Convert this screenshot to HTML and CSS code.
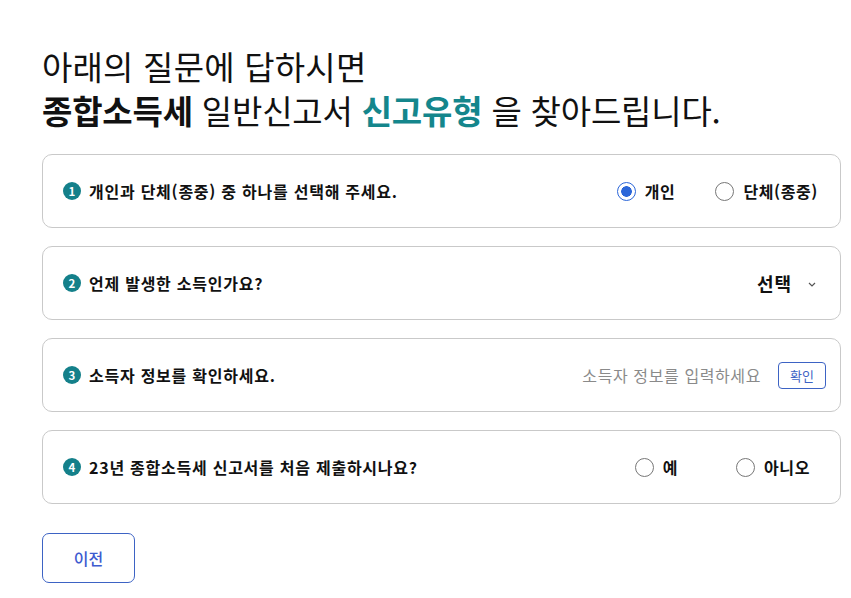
FILE: index.html
```html
<!DOCTYPE html>
<html lang="ko">
<head>
<meta charset="utf-8">
<link rel="stylesheet" href="styles.css">
</head>
<body>
<main class="page">
  <h1 class="title">
    <span class="line">아래의 질문에 답하시면</span>
    <span class="line line2"><b>종합소득세</b> 일반신고서 <b class="accent">신고유형</b> 을 찾아드립니다.</span>
  </h1>

  <section class="cards">
    <div class="card">
      <div class="q"><span class="num">1</span>개인과 단체(종중) 중 하나를 선택해 주세요.</div>
      <div class="opts">
        <label class="radio"><span class="dot on"></span>개인</label>
        <label class="radio"><span class="dot"></span>단체(종중)</label>
      </div>
    </div>

    <div class="card">
      <div class="q"><span class="num">2</span>언제 발생한 소득인가요?</div>
      <div class="select">선택
        <svg class="chev" width="8" height="5" viewBox="0 0 8 5"><path d="M1 1l3 3 3-3" fill="none" stroke="#555" stroke-width="1.2"/></svg>
      </div>
    </div>

    <div class="card">
      <div class="q"><span class="num">3</span>소득자 정보를 확인하세요.</div>
      <div class="inputrow">
        <span class="placeholder">소득자 정보를 입력하세요</span>
        <button class="btn-sm">확인</button>
      </div>
    </div>

    <div class="card">
      <div class="q"><span class="num">4</span>23년 종합소득세 신고서를 처음 제출하시나요?</div>
      <div class="opts opts-yn">
        <label class="radio"><span class="dot"></span>예</label>
        <label class="radio"><span class="dot"></span>아니오</label>
      </div>
    </div>
  </section>

  <button class="btn-prev">이전</button>
</main>
</body>
</html>
```

FILE: styles.css
```css
* { box-sizing: border-box; }
body {
  margin: 0;
  background: #fff;
  color: #111;
  font-family: "Noto Sans CJK KR", "Noto Sans", sans-serif;
}
.page {
  width: 851px;
  padding: 44px 10px 0 42px;
}
.title {
  margin: 0;
  font-size: 33px;
  font-weight: 400;
  line-height: 44px;
  letter-spacing: 0.2px;
}
.title .line { display: block; }
.title .line2 { letter-spacing: -0.2px; }
.title b { font-weight: 700; }
.title .accent { color: #14868c; }

.cards {
  margin-top: 22px;
  display: flex;
  flex-direction: column;
  gap: 18px;
}
.card {
  height: 74px;
  border: 1px solid #c9c9c9;
  border-radius: 10px;
  display: flex;
  align-items: center;
  justify-content: space-between;
  padding: 0 22px 0 20px;
}
.q {
  display: flex;
  align-items: center;
  font-size: 16px;
  font-weight: 700;
  letter-spacing: 0.75px;
}
.num {
  width: 18px;
  height: 18px;
  border-radius: 50%;
  background: #14808a;
  color: #fff;
  font-size: 11.5px;
  font-weight: 700;
  display: inline-flex;
  align-items: center;
  justify-content: center;
  margin-right: 8px;
  letter-spacing: 0;
}
.opts {
  display: flex;
  gap: 40px;
}
.opts-yn { gap: 58px; margin-right: 8px; }
.radio {
  display: flex;
  align-items: center;
  font-size: 16px;
  font-weight: 700;
  letter-spacing: 0.6px;
}
.dot {
  width: 19px;
  height: 19px;
  border-radius: 50%;
  border: 1px solid #777;
  margin-right: 9px;
  background: #fff;
}
.dot.on {
  border: 1.5px solid #2b66d9;
  background: radial-gradient(circle, #2b66d9 0 5px, #fff 5.6px);
}
.select {
  display: flex;
  align-items: center;
  font-size: 18px;
  font-weight: 700;
  letter-spacing: 1px;
  gap: 16px;
  margin-right: 2px;
}
.chev { margin-top: 2px; }
.inputrow {
  display: flex;
  align-items: center;
  gap: 17px;
  margin-right: -8px;
}
.placeholder {
  color: #8a8a8a;
  font-size: 16px;
  letter-spacing: 0.6px;
}
.btn-sm {
  font-family: inherit;
  width: 48px;
  height: 27px;
  border: 1px solid #3d63c4;
  border-radius: 4px;
  background: #fff;
  color: #3d63c4;
  font-size: 13px;
  padding: 0;
}
.btn-prev {
  margin-top: 29px;
  width: 93px;
  height: 50px;
  border: 1px solid #3d63c4;
  border-radius: 7px;
  background: #fff;
  color: #3d5bd0;
  font-family: inherit;
  font-size: 16px;
  font-weight: 500;
}
```
